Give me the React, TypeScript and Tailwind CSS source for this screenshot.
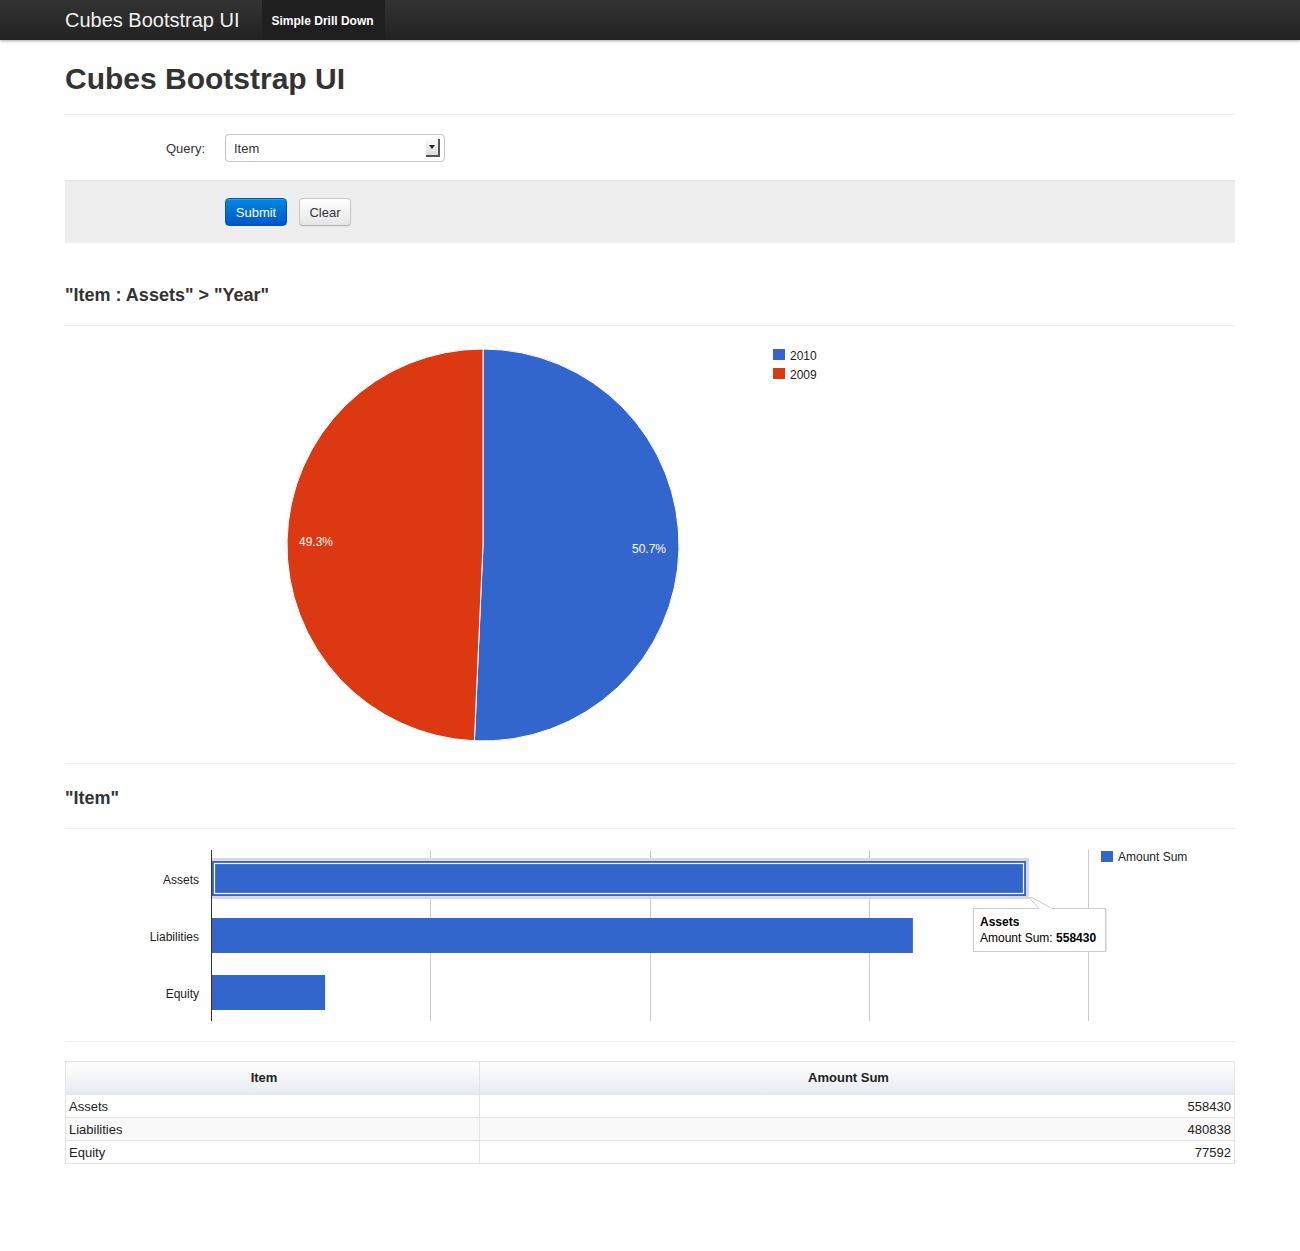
import React from "react";

const FONT = { fontFamily: '"Liberation Sans", Arial, Helvetica, sans-serif' };

function Nav() {
  return (
    <div className="relative z-10 h-[40px] bg-gradient-to-b from-[#333333] to-[#222222] shadow-[0_1px_3px_rgba(0,0,0,0.35)]">
      <div className="mx-auto flex h-full w-[1170px] items-stretch">
        <div className="flex items-center pr-[22px] text-[20px] leading-none text-[#f2f2f2]">Cubes Bootstrap UI</div>
        <div className="flex items-center bg-[#1f1f1f] pl-[10px] pr-[11px] pt-[1px] text-[12px] font-bold text-white">Simple Drill Down</div>
      </div>
    </div>
  );
}

function SelectBox() {
  return (
    <div className="relative flex h-[28px] w-[220px] items-center rounded-[4px] border border-[#c6c6c6] bg-white pl-[8px] pt-[1px] text-[13px] text-[#333]">
      Item
      <span className="absolute right-[4px] top-[4px] flex h-[18px] w-[14px] items-center justify-center border-b-2 border-r-2 border-b-[#555] border-r-[#555] bg-gradient-to-b from-[#fafafa] to-[#dcdcdc]">
        <svg width="8" height="8" viewBox="0 0 8 8">
          <path d="M1 2 L7 2 L4 6 Z" fill="#222" />
        </svg>
      </span>
    </div>
  );
}

function PieChart() {
  const cx = 418;
  const cy = 219;
  const r = 196;
  const a = (182.52 * Math.PI) / 180;
  const ex = cx + r * Math.sin(a);
  const ey = cy - r * Math.cos(a);
  return (
    <svg width="1170" height="437" className="block">
      <path d={`M ${cx} ${cy} L ${cx} ${cy - r} A ${r} ${r} 0 1 1 ${ex} ${ey} Z`} fill="#3366cc" stroke="#ffffff" strokeWidth="1" />
      <path d={`M ${cx} ${cy} L ${ex} ${ey} A ${r} ${r} 0 0 1 ${cx} ${cy - r} Z`} fill="#dc3912" stroke="#ffffff" strokeWidth="1" />
      <text x="584" y="227" textAnchor="middle" fontSize="12" fill="#ffffff" style={FONT}>50.7%</text>
      <text x="251" y="220" textAnchor="middle" fontSize="12" fill="#ffffff" style={FONT}>49.3%</text>
      <rect x="708" y="23" width="12" height="11" fill="#3366cc" />
      <text x="725" y="34" fontSize="12" fill="#222222" style={FONT}>2010</text>
      <rect x="708" y="42" width="12" height="11" fill="#dc3912" />
      <text x="725" y="53" fontSize="12" fill="#222222" style={FONT}>2009</text>
    </svg>
  );
}

function BarChart() {
  const x0 = 147;
  const scale = 814 / 558430;
  const bars = [
    { label: "Assets", v: 558430, y: 32 },
    { label: "Liabilities", v: 480838, y: 89 },
    { label: "Equity", v: 77592, y: 146 },
  ];
  const grid = [365.5, 585.5, 804.5, 1023.5];
  return (
    <svg width="1170" height="212" className="block">
      {grid.map((g) => (
        <line key={g} x1={g} x2={g} y1="21" y2="192" stroke="#cccccc" strokeWidth="1" />
      ))}
      <rect x={x0 - 1} y={29} width={814 + 4} height={41} fill="#d9d9d9" />
      {bars.map((b) => (
        <rect key={b.label} x={x0} y={b.y} width={b.v * scale} height={35} fill="#3366cc" />
      ))}
      <rect x={x0 + 2.5} y={34.5} width={814 - 5} height={30} fill="none" stroke="#ffffff" strokeWidth="1.2" />
      <line x1="146.5" x2="146.5" y1="21" y2="192" stroke="#333333" strokeWidth="1" />
      {bars.map((b) => (
        <text key={b.label + "t"} x="134" y={b.y + 23} textAnchor="end" fontSize="12" fill="#222222" style={FONT}>
          {b.label}
        </text>
      ))}
      <rect x="1036" y="22" width="12" height="11" fill="#3366cc" />
      <text x="1053" y="32" fontSize="12" fill="#222222" style={FONT}>Amount Sum</text>
      <rect x="909" y="80" width="133" height="43" fill="#cccccc" opacity="0.5" />
      <rect x="908.5" y="79.5" width="132" height="43" fill="#ffffff" stroke="#cccccc" strokeWidth="1" />
      <path d="M 974 79.5 L 964 68.5 L 967 68.5 L 987 79.5" fill="#ffffff" stroke="#cccccc" strokeWidth="1" />
      <line x1="974.5" x2="986.5" y1="79.5" y2="79.5" stroke="#ffffff" strokeWidth="1.5" />
      <text x="915" y="96.5" fontSize="12" fontWeight="bold" fill="#000000" style={FONT}>Assets</text>
      <text x="915" y="112.5" fontSize="12" fill="#000000" style={FONT}>
        Amount Sum: <tspan fontWeight="bold">558430</tspan>
      </text>
    </svg>
  );
}

function DataTable() {
  const rows = [
    ["Assets", "558430"],
    ["Liabilities", "480838"],
    ["Equity", "77592"],
  ];
  return (
    <table className="w-full border-collapse border border-[#e3e3e3] text-[13px] text-[#222]">
      <thead>
        <tr className="h-[33px] bg-gradient-to-b from-[#ffffff] to-[#e6eaf3]">
          <th className="w-[414px] border border-[#e3e3e3] pr-[17px] text-center font-bold">Item</th>
          <th className="border border-[#e3e3e3] pr-[17px] text-center font-bold">Amount Sum</th>
        </tr>
      </thead>
      <tbody>
        {rows.map((r, i) => (
          <tr key={r[0]} className={`h-[23px] ${i === 1 ? "bg-[#f9f9f9]" : "bg-white"}`}>
            <td className="border border-[#e3e3e3] px-[3px] pt-[2px] pb-0 text-left">{r[0]}</td>
            <td className="border border-[#e3e3e3] px-[3px] pt-[2px] pb-0 text-right">{r[1]}</td>
          </tr>
        ))}
      </tbody>
    </table>
  );
}

export default function App() {
  return (
    <div className="min-h-[1251px] bg-white text-[#333]" style={FONT}>
      <Nav />
      <div className="mx-auto w-[1170px]">
        <div className="mt-[21px] border-b border-[#eeeeee] pb-[17px]">
          <h1 className="text-[30px] font-bold leading-[36px] text-[#333]">Cubes Bootstrap UI</h1>
        </div>
        <div className="flex items-center pt-[19px] pb-[18px]">
          <label className="w-[140px] pt-[1px] text-right text-[13px] text-[#333]">Query:</label>
          <div className="ml-[20px]">
            <SelectBox />
          </div>
        </div>
        <div className="flex gap-[12px] border-t border-[#e5e5e5] bg-[#eeeeee] py-[17px] pl-[160px]">
          <button className="h-[28px] w-[62px] rounded-[4px] border border-[#0055bb] bg-gradient-to-b from-[#0088dd] to-[#0055cc] pt-[1px] text-[13px] text-white shadow-[inset_0_1px_0_rgba(255,255,255,0.2)]">
            Submit
          </button>
          <button className="h-[28px] w-[52px] rounded-[4px] border border-[#c8c8c8] border-b-[#b3b3b3] bg-gradient-to-b from-[#ffffff] to-[#e6e6e6] pt-[1px] text-[13px] text-[#333] shadow-[0_1px_2px_rgba(0,0,0,0.05)]">
            Clear
          </button>
        </div>
        <div className="mt-[39px] border-b border-[#eeeeee] pb-[16px]">
          <h3 className="text-[18px] font-bold leading-[27px] text-[#333]">"Item : Assets" &gt; "Year"</h3>
        </div>
        <div className="border-b border-[#eeeeee]">
          <PieChart />
        </div>
        <div className="mt-[21px] border-b border-[#eeeeee] pb-[16px]">
          <h3 className="text-[18px] font-bold leading-[27px] text-[#333]">"Item"</h3>
        </div>
        <div className="border-b border-[#eeeeee]">
          <BarChart />
        </div>
        <div className="mt-[19px]">
          <DataTable />
        </div>
      </div>
    </div>
  );
}
